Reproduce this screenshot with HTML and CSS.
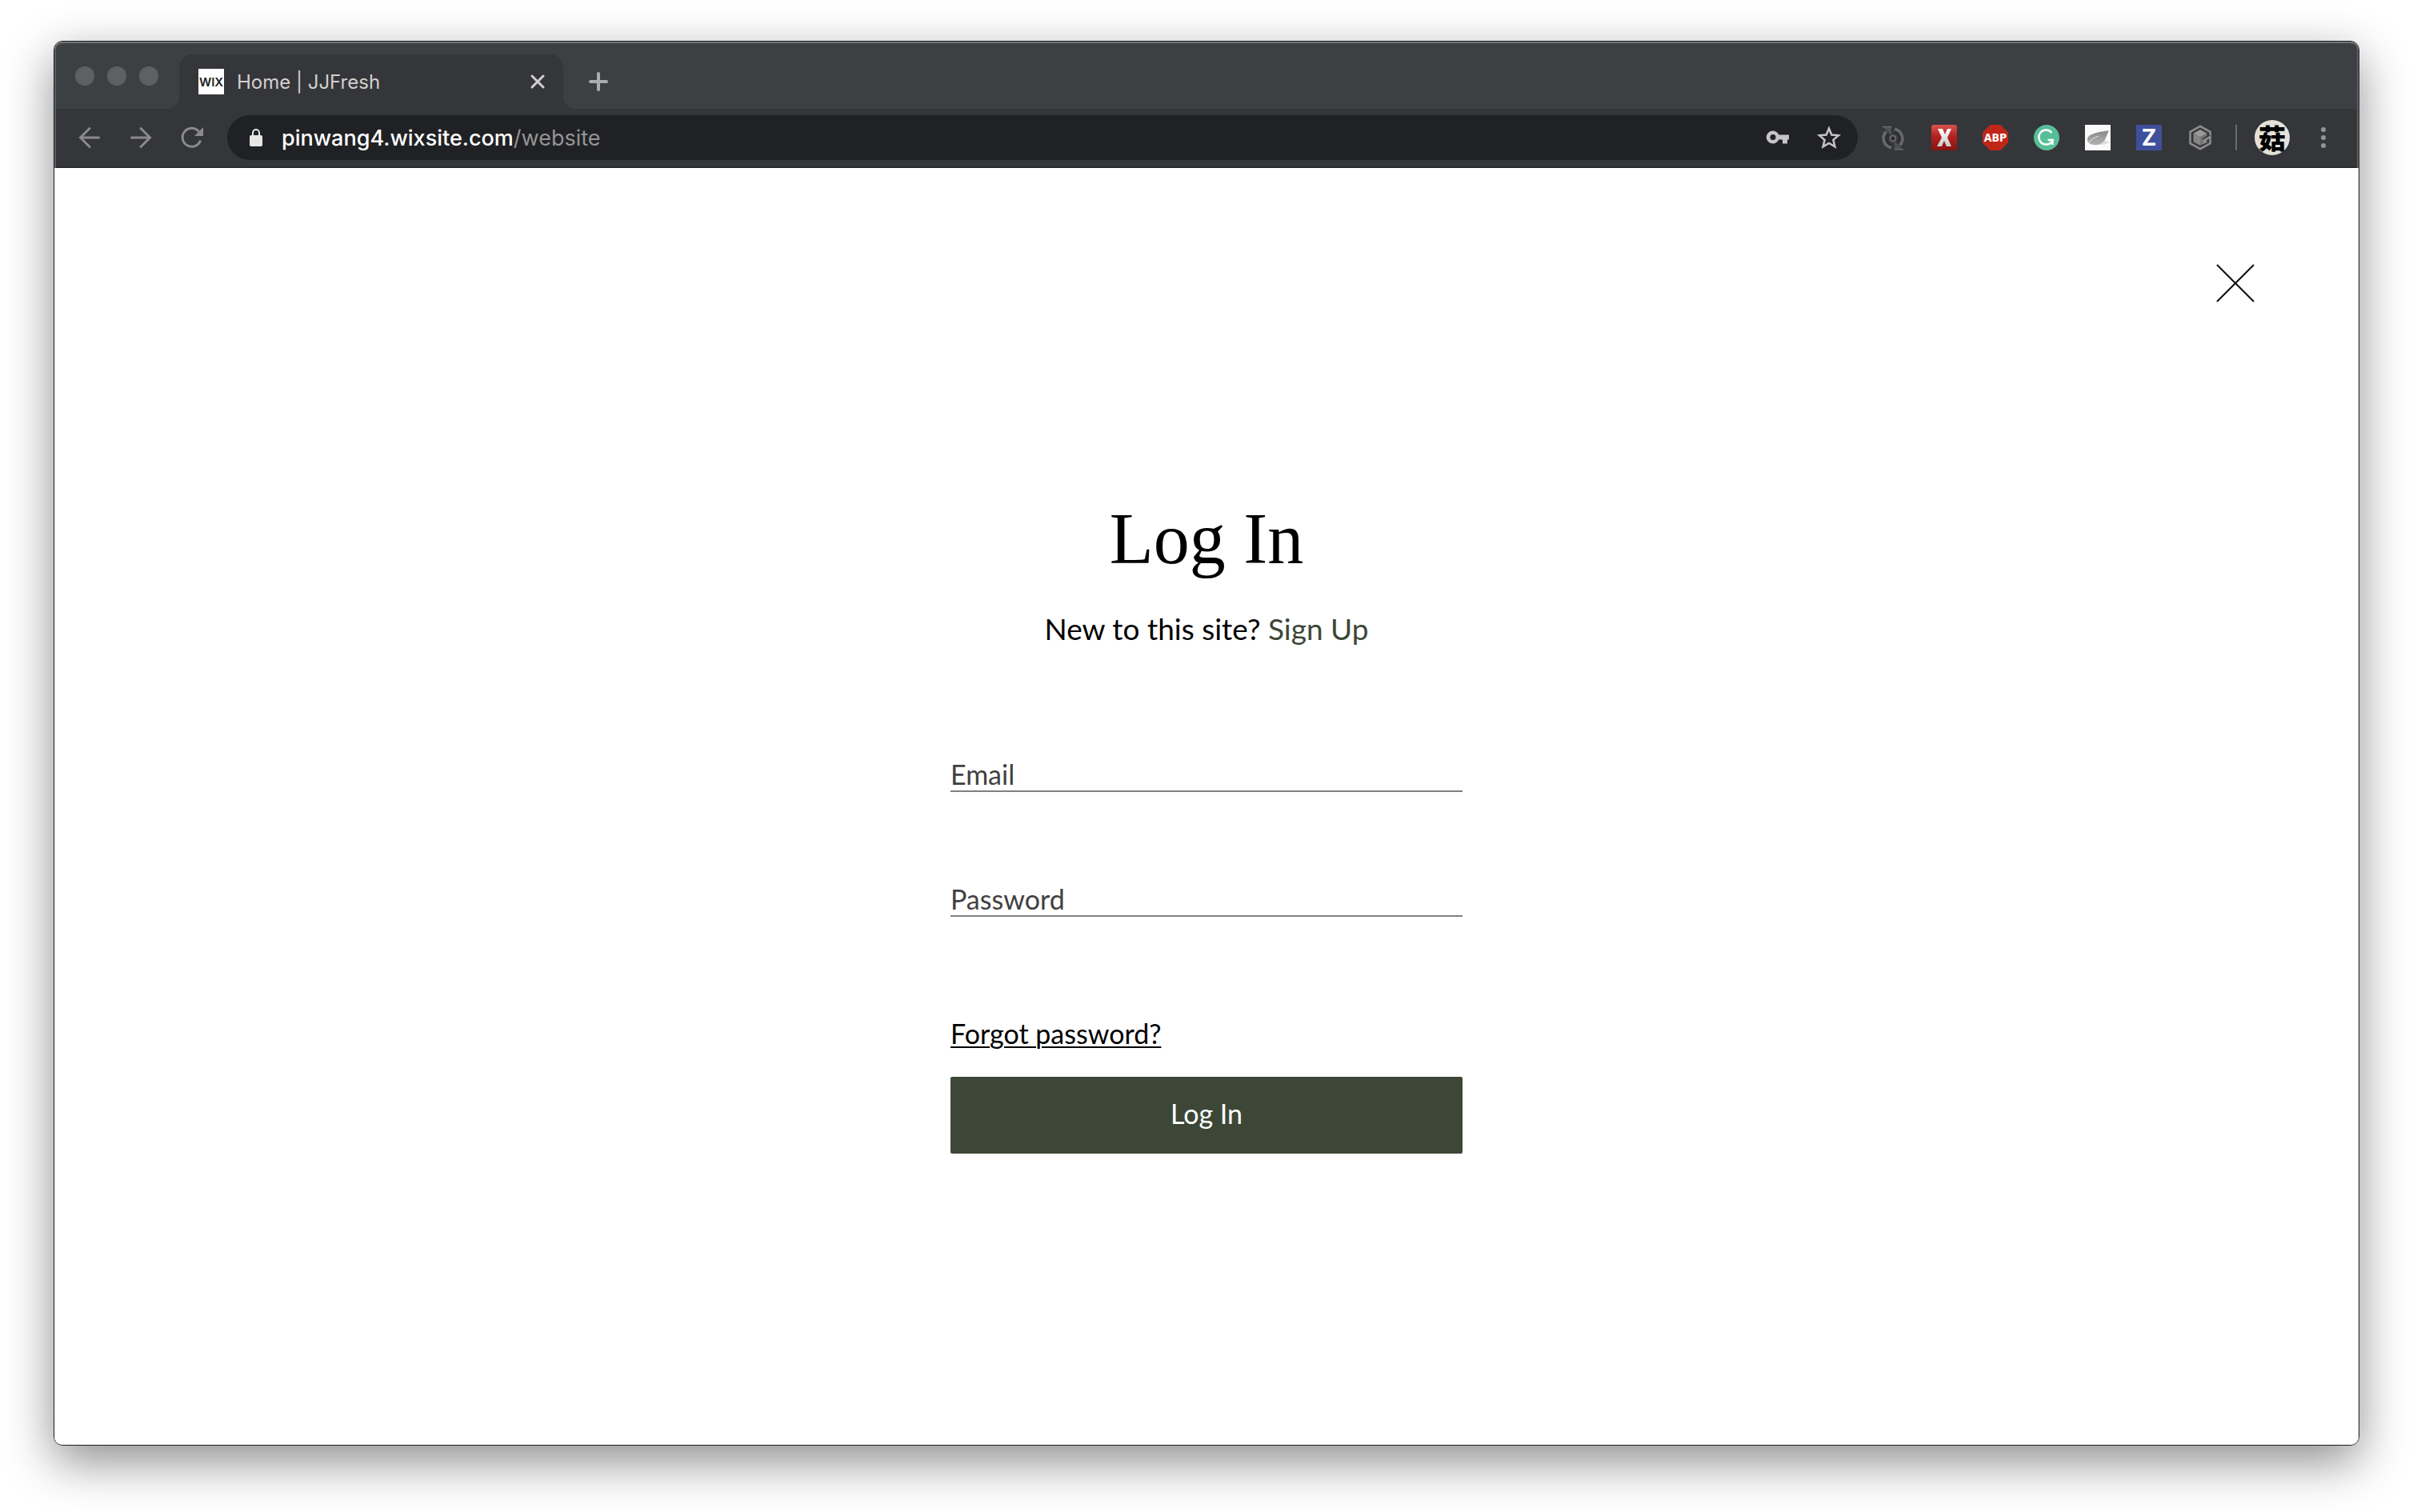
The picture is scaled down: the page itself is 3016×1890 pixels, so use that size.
FILE: index.html
```html
<!DOCTYPE html>
<html lang="en">
<head>
<meta charset="utf-8">
<meta name="viewport" content="width=device-width, initial-scale=1">
<title>Home | JJFresh</title>
<link rel="stylesheet" href="styles.css">
</head>
<body>
<div class="window">
  <header class="chrome">
    <div class="tabstrip">
      <div class="lights"><span class="light"></span><span class="light"></span><span class="light"></span></div>
      <div class="tab">
        <span class="favicon">WIX</span>
        <span class="tab-title">Home | JJFresh</span>
        <button class="icon-btn tab-close" type="button" aria-label="Close tab">
          <svg width="20" height="20" viewBox="0 0 20 20"><path d="M3 3l14 14M17 3L3 17" fill="none" stroke="#d2d0ce" stroke-width="3" stroke-linecap="round"/></svg>
        </button>
      </div>
      <button class="icon-btn new-tab" type="button" aria-label="New tab">
        <svg width="24" height="24" viewBox="0 0 24 24"><path d="M12 2v20M2 12h20" fill="none" stroke="#a9adaf" stroke-width="4" stroke-linecap="round"/></svg>
      </button>
    </div>
    <div class="toolbar">
      <nav class="nav">
        <button class="icon-btn" type="button" aria-label="Back">
          <svg width="32" height="32" viewBox="0 0 32 32"><path d="M27.500 16H5M16 4.500L4.500 16 16 27.500" fill="none" stroke="#8a8a8c" stroke-width="3" stroke-linecap="round"/></svg>
        </button>
        <button class="icon-btn" type="button" aria-label="Forward">
          <svg width="32" height="32" viewBox="0 0 32 32"><path d="M4.500 16H27M16 4.500L27.500 16 16 27.500" fill="none" stroke="#8a8a8c" stroke-width="3" stroke-linecap="round"/></svg>
        </button>
        <button class="icon-btn" type="button" aria-label="Reload">
          <svg width="32" height="32" viewBox="0 0 32 32"><path d="M26.500 19.500A11.500 11.500 0 1 1 24.500 8.500" fill="none" stroke="#8a8a8c" stroke-width="3"/><path d="M30 3v11H19z" fill="#8a8a8c"/></svg>
        </button>
      </nav>
      <div class="omnibox">
        <svg class="lock" width="16" height="24" viewBox="0 0 16 24"><path d="M4 10V6a4 4 0 0 1 8 0v4" fill="none" stroke="#e6e6e6" stroke-width="2"/><rect y="9" width="16" height="14" rx="2" fill="#e6e6e6"/></svg>
        <span class="url">pinwang4.wixsite.com<span class="path">/website</span></span>
        <button class="icon-btn" type="button" aria-label="Saved passwords">
          <svg width="32" height="32" viewBox="0 0 32 32"><path fill-rule="evenodd" d="M17.200 12.500H30v6h-2v5h-6v-5h-4.800A8 8 0 1 1 17.200 12.500zM10 12a3.500 3.500 0 1 0 0 7 3.500 3.500 0 0 0 0-7z" fill="#c6c4c4"/></svg>
        </button>
        <button class="icon-btn" type="button" aria-label="Bookmark">
          <svg width="32" height="32" viewBox="0 0 32 32"><path d="M16 4.500l3.300 8 8.700.7-6.600 5.700 2 8.500L16 22.900l-7.400 4.500 2-8.500L4 13.200l8.700-.7z" fill="none" stroke="#c6c4c4" stroke-width="2.500"/></svg>
        </button>
      </div>
      <div class="extensions">
        <button class="icon-btn" type="button" aria-label="Sync">
          <svg width="32" height="32" viewBox="0 0 32 32"><g fill="none" stroke="#67686a" stroke-width="4"><path d="M14 28.500A12 12 0 0 1 7.500 8.500"/><path d="M18 5.500A12 12 0 0 1 24.500 25.500"/></g><g fill="none" stroke="#2a2b2d" stroke-width="2"><path d="M14 25.500A9 9 0 0 1 9 11.500"/><path d="M18 8.500A9 9 0 0 1 23 22.500"/></g><path d="M3 2.500h11V13z" fill="#505153"/><path d="M29 31H18V20.500z" fill="#505153"/><path d="M3 2.500h11M18 31h11" stroke="#7a7b7c"/><circle cx="16" cy="17" r="3.500" fill="#2a2b2d" stroke="#6b6b6c" stroke-width="2"/></svg>
        </button>
        <button class="icon-btn" type="button" aria-label="X extension">
          <svg width="32" height="32" viewBox="0 0 32 32"><defs><linearGradient id="red" x2="0" y2="1"><stop stop-color="#d9534f"/><stop offset=".45" stop-color="#b5211f"/><stop offset="1" stop-color="#851512"/></linearGradient><linearGradient id="silver" x2="0" y2="1"><stop stop-color="#fff"/><stop offset="1" stop-color="#c9c9c9"/></linearGradient></defs><rect width="32" height="32" rx="3" fill="url(#red)"/><path d="M8 5h6l3 7 3-7h5l-5 11 5 11h-6l-3-7-3 7H7l6-11z" fill="url(#silver)"/></svg>
        </button>
        <button class="icon-btn ext-abp" type="button">ABP</button>
        <button class="icon-btn" type="button" aria-label="Grammar check">
          <svg width="32" height="32" viewBox="0 0 32 32"><circle cx="16" cy="16" r="16" fill="#57bf98"/><path d="M22.500 10A9 9 0 1 0 16 24.500c3 0 6-1.500 7.500-5.500H17.500M23.500 18v7" fill="none" stroke="#fff" stroke-width="2.500"/></svg>
        </button>
        <button class="icon-btn" type="button" aria-label="Leaf">
          <svg width="32" height="32" viewBox="0 0 32 32"><defs><linearGradient id="leaf" x2="0" y2="1"><stop stop-color="#888"/><stop offset="1" stop-color="#b2b2b2"/></linearGradient></defs><path fill="#fafafa" d="M0 0h32v32H0z"/><ellipse cx="18" cy="22" rx="12" ry="3" fill="#dedede"/><path d="M30 7C17 9 4 11 3 18c-1 7 12 10 19 4 5-4 5-10 8-15z" fill="url(#leaf)"/><path d="M5 22c3-4 7-6 12-8" fill="none" stroke="#eee" stroke-width="1"/></svg>
        </button>
        <button class="icon-btn ext-z" type="button">Z</button>
        <button class="icon-btn" type="button" aria-label="Cube">
          <svg width="32" height="32" viewBox="0 0 32 32"><path d="M28.500 13V8.800L16 1.800 3.500 8.800v14.400l12.500 7 12.500-7V15l-8 4.500v3l4-2" fill="none" stroke="#8b8b8c" stroke-width="2.600"/><path d="M16 6l8.500 4.800L16 15.500 7.500 10.800z" fill="#9b9b9b"/><path d="M7.500 10.800l8.500 4.700v10.500l-8.500-4.800z" fill="#858586"/><path d="M16 15.500l8.500-4.700v3L19 17v7.500L16 26z" fill="#747475"/></svg>
        </button>
      </div>
      <span class="divider"></span>
      <button class="icon-btn avatar" type="button">菇</button>
      <button class="icon-btn menu" type="button" aria-label="Menu">
        <svg width="32" height="32" viewBox="0 0 32 32"><g fill="#949496"><circle cx="16" cy="6" r="3"/><circle cx="16" cy="16" r="3"/><circle cx="16" cy="26" r="3"/></g></svg>
      </button>
    </div>
  </header>
  <main class="page">
    <div class="page-top">
      <button class="icon-btn" type="button" aria-label="Close">
        <svg width="48" height="48" viewBox="0 0 48 48"><path d="M1 1l46 46M47 1L1 47" fill="none" stroke="#111" stroke-width="2"/></svg>
      </button>
    </div>
    <form class="login">
      <h1 class="title">Log In</h1>
      <p class="signup">New to this site? <a href="#signup">Sign Up</a></p>
      <div class="field">
        <label for="email">Email</label>
        <input id="email" type="email">
      </div>
      <div class="field">
        <label for="password">Password</label>
        <input id="password" type="password">
      </div>
      <a class="forgot" href="#forgot">Forgot password?</a>
      <button class="submit" type="button">Log In</button>
    </form>
  </main>
</div>
</body>
</html>
```
FILE: styles.css
```css
* {
  box-sizing: border-box;
}

body {
  margin: 0;
  min-height: 100vh;
  padding: 51px 67px 83px;
  display: flex;
  background: #fff;
  font-family: Lato, "Open Sans", sans-serif;
}

button {
  font: inherit;
  cursor: pointer;
}

.window {
  flex: 1;
  display: flex;
  flex-direction: column;
  border: 1px solid #1c1c1e;
  border-radius: 11px;
  overflow: hidden;
  box-shadow: 0 20px 60px rgba(0, 0, 0, 0.45);
}

.chrome {
  font-family: Inter, "Liberation Sans", sans-serif;
  background: #3c4043;
  border-radius: 10px 10px 0 0;
  box-shadow: inset 0 2px #737678, inset 2px 0 #5c5e60, inset -2px 0 #5c5e60;
}

.icon-btn {
  display: flex;
  align-items: center;
  justify-content: center;
  flex: none;
  padding: 0;
  border: 0;
  background: none;
}

.icon-btn svg {
  display: block;
}

/* Tab strip */

.tabstrip {
  display: flex;
  align-items: flex-end;
  height: 84px;
}

.lights {
  display: flex;
  align-items: center;
  gap: 16px;
  width: 156px;
  height: 82px;
  padding-left: 26px;
}

.light {
  width: 24px;
  height: 24px;
  border-radius: 50%;
  background: #5d6164;
}

.tab {
  position: relative;
  display: flex;
  align-items: center;
  gap: 16px;
  width: 480px;
  height: 68px;
  padding: 0 22px 0 24px;
  border-radius: 16px 16px 0 0;
  background: #35363a;
}

.tab::before,
.tab::after {
  content: "";
  position: absolute;
  bottom: 0;
  width: 16px;
  height: 16px;
}

.tab::before {
  right: 100%;
  background: radial-gradient(circle at 0 0, transparent 16px, #35363a 16px);
}

.tab::after {
  left: 100%;
  background: radial-gradient(circle at 100% 0, transparent 16px, #35363a 16px);
}

.favicon {
  display: flex;
  align-items: center;
  justify-content: center;
  width: 32px;
  height: 32px;
  background: #fff;
  color: #222;
  font-size: 15px;
  font-weight: 600;
}

.tab-title {
  flex: 1;
  color: #d2d0ce;
  font-size: 24px;
}

.new-tab {
  width: 88px;
  height: 68px;
}

/* Toolbar */

.toolbar {
  display: flex;
  align-items: center;
  height: 74px;
  margin: 0 2px;
  padding: 0 26px;
  background: #35363a;
  border-bottom: 2px solid #28282a;
}

.nav {
  display: flex;
  gap: 32px;
  margin-right: 28px;
}

.omnibox {
  flex: 1;
  display: flex;
  align-items: center;
  gap: 32px;
  height: 56px;
  padding: 0 20px 0 28px;
  border-radius: 28px;
  background: #202124;
}

.lock {
  flex: none;
  margin-right: -8px;
}

.url {
  flex: 1;
  color: #fff;
  font-size: 27px;
  font-weight: 500;
}

.path {
  color: #949496;
  font-weight: 400;
}

.extensions {
  display: flex;
  gap: 32px;
  margin: 0 28px;
}

.ext-abp,
.ext-z {
  width: 32px;
  height: 32px;
  color: #fff;
  font-weight: 700;
}

.ext-abp {
  background: #c02618;
  font-family: "DejaVu Sans Condensed", "Liberation Sans", sans-serif;
  font-size: 14px;
  clip-path: polygon(30% 0, 70% 0, 100% 30%, 100% 70%, 70% 100%, 30% 100%, 0 70%, 0 30%);
}

.ext-z {
  background: #3f4f9c;
  font-size: 28px;
}

.divider {
  width: 2px;
  height: 32px;
  background: #6b6c6f;
}

.avatar {
  width: 44px;
  height: 44px;
  margin: 0 26px 0 22px;
  border-radius: 50%;
  background: #e3e1d9;
  color: #000;
  font-family: "Noto Sans CJK SC", sans-serif;
  font-size: 34px;
  font-weight: 900;
  line-height: 44px;
}

/* Login page */

.page {
  flex: 1;
  background: #fff;
}

.page-top {
  display: flex;
  justify-content: flex-end;
  padding: 120px 130px 0;
}

.login {
  display: flex;
  flex-direction: column;
  width: 640px;
  margin: 0 auto;
  padding-top: 244px;
  color: #000;
  font-size: 34px;
  line-height: 40px;
}

.title {
  margin: 0;
  font-family: "Liberation Serif", serif;
  font-size: 90px;
  font-weight: 400;
  line-height: 104px;
  text-align: center;
}

.signup {
  margin: 36px 0 136px;
  font-size: 37px;
  line-height: 48px;
  text-align: center;
}

.signup a {
  color: #3d4737;
  text-decoration: none;
}

.field {
  display: grid;
  margin-bottom: 112px;
}

.field label,
.field input {
  grid-area: 1 / 1;
}

.field label {
  color: #414141;
  line-height: 44px;
}

.field input {
  width: 100%;
  height: 44px;
  padding: 0;
  border: 0;
  border-bottom: 2px solid #808080;
  outline: 0;
  background: transparent;
  font: inherit;
}

.forgot {
  align-self: flex-start;
  margin-top: 14px;
  color: #000;
  text-underline-offset: 3px;
  text-decoration-thickness: 2px;
}

.submit {
  height: 96px;
  margin-top: 34px;
  padding: 0 0 4px;
  border: 0;
  border-radius: 2px;
  background: #3d4737;
  color: #fff;
}
```
